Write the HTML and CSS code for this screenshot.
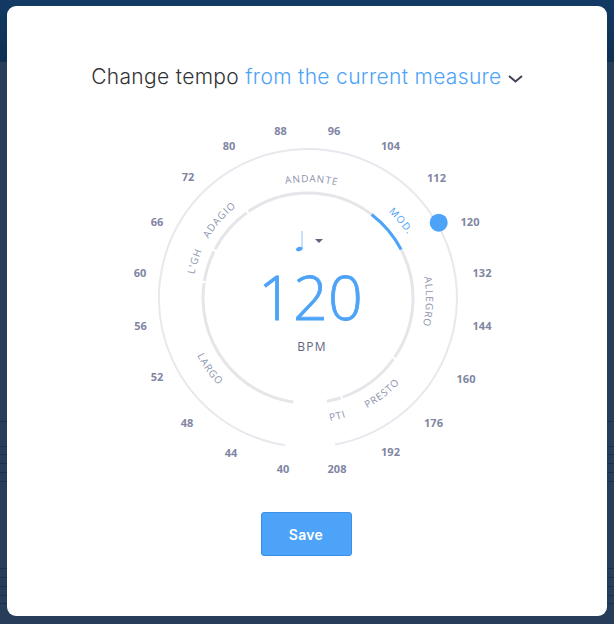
FILE: index.html
```html
<!DOCTYPE html>
<html lang="en">
<head>
  <meta charset="UTF-8">
  <meta name="viewport" content="width=device-width, initial-scale=1.0">
  <title>Change tempo</title>
  <link rel="stylesheet" href="styles.css">
</head>
<body>
  <div class="card">
    <h1 class="title">
      Change tempo <span class="title-link">from the current measure</span>
      <svg class="chevron" width="15" height="8" viewBox="0 0 15 8"><path d="M1 1l6.5 5.5L14 1"/></svg>
    </h1>

    <svg class="dial" width="600" height="420" viewBox="0 0 600 420">
      <defs>
        <path id="arcTop" d="M 185 219 A 116 116 0 0 1 417 219"/>
        <path id="arcRight" d="M 301 101 A 118 118 0 0 1 301 337"/>
        <path id="arcBottom" d="M 176 219 A 125 125 0 0 0 426 219"/>
      </defs>

      <path class="ring-outer" d="M 278 366.200 A 149 149 0 1 1 328 365.500"/>

      <g class="ring-inner">
        <path d="M 286.200 323 A 105 105 0 0 1 197.100 204"/>
        <path d="M 197.400 201.900 A 105 105 0 0 1 206.900 172.500"/>
        <path d="M 207.900 170.500 A 105 105 0 0 1 239.700 133.700"/>
        <path d="M 241.500 132.500 A 105 105 0 0 1 364.600 135.500"/>
        <path d="M 394.100 170.500 A 105 105 0 0 1 387.700 278.200"/>
        <path d="M 386.500 280 A 105 105 0 0 1 335.700 318.100"/>
        <path d="M 333.800 318.800 A 105 105 0 0 1 319.800 322.300"/>
      </g>
      <path class="ring-active" d="M 364.600 135.500 A 105 105 0 0 1 394.100 170.500"/>

      <g class="zone">
        <text><textPath href="#arcTop" startOffset="51%">ANDANTE</textPath></text>
        <text class="zone-active"><textPath href="#arcRight" startOffset="28%">MOD.</textPath></text>
        <text><textPath href="#arcRight" startOffset="51%">ALLEGRO</textPath></text>
        <text><textPath href="#arcTop" startOffset="23%">ADAGIO</textPath></text>
        <text><textPath href="#arcTop" startOffset="10%">L'GH</textPath></text>
        <text><textPath href="#arcBottom" startOffset="20%">LARGO</textPath></text>
        <text><textPath href="#arcBottom" startOffset="71%">PRESTO</textPath></text>
        <text><textPath href="#arcBottom" startOffset="57.800%">PTI</textPath></text>
      </g>

      <g class="tick">
        <text x="273.500" y="56">88</text>
        <text x="327" y="56">96</text>
        <text x="222" y="71">80</text>
        <text x="383.500" y="71">104</text>
        <text x="181" y="102">72</text>
        <text x="429.500" y="103">112</text>
        <text x="150" y="147">66</text>
        <text x="463" y="147">120</text>
        <text x="133" y="198">60</text>
        <text x="475" y="198">132</text>
        <text x="133.500" y="251">56</text>
        <text x="475" y="251">144</text>
        <text x="150" y="302">52</text>
        <text x="459" y="304">160</text>
        <text x="180" y="348">48</text>
        <text x="426.500" y="348">176</text>
        <text x="224" y="378">44</text>
        <text x="383.500" y="377">192</text>
        <text x="276" y="394">40</text>
        <text x="330" y="394">208</text>
      </g>

      <circle class="handle" cx="431.700" cy="143.700" r="9"/>

      <path class="note-stem" d="M 295 152 V 170"/>
      <path class="note-head" d="M 295.500 169.500 C 295.500 172.500 289 173.500 289 170.500 C 289 167.500 295.500 166.500 295.500 169.500 Z"/>
      <path class="caret" d="M 308 160 H 316 L 312 164 Z"/>

      <text class="bpm-value" x="303.500" y="240.500">120</text>
      <text class="bpm-label" x="305" y="272">BPM</text>
    </svg>

    <button class="save" type="button">Save</button>
  </div>
</body>
</html>
```

FILE: styles.css
```css
html, body {
  margin: 0;
  height: 100%;
}
body {
  background-color: #273e5b;
  background-image:
    linear-gradient(#123a63, #0f2f52),
    linear-gradient(#1a2f4a, #1a2f4a),
    linear-gradient(#1a2f4a, #1a2f4a),
    linear-gradient(#1a2f4a, #1a2f4a),
    linear-gradient(#1a2f4a, #1a2f4a),
    linear-gradient(#1a2f4a, #1a2f4a),
    linear-gradient(#1a2f4a, #1a2f4a),
    linear-gradient(#1a2f4a, #1a2f4a),
    linear-gradient(#1a2f4a, #1a2f4a),
    linear-gradient(#1a2f4a, #1a2f4a),
    linear-gradient(#1a2f4a, #1a2f4a),
    linear-gradient(#1a2f4a, #1a2f4a);
  background-repeat: no-repeat;
  background-size: 100% 62px, 100% 1px, 100% 1px, 100% 1px, 100% 1px, 100% 1px, 100% 1px, 100% 1px, 100% 1px, 100% 1px, 100% 1px, 100% 1px;
  background-position: 0 0, 0 421px, 0 446px, 0 454px, 0 463px, 0 472px, 0 481px, 0 568px, 0 577px, 0 586px, 0 595px, 0 603px;
  padding: 6px 7px 8px;
  box-sizing: border-box;
  font-family: "Open Sans", sans-serif;
}
.card {
  height: 610px;
  background-color: #fff;
  border-radius: 9px;
  display: flex;
  flex-direction: column;
  align-items: center;
}
.title {
  margin: 56px 0 0;
  font-family: Inter, sans-serif;
  font-size: 21px;
  line-height: 30px;
  font-weight: 300;
  letter-spacing: 0.33px;
  color: #333;
  white-space: nowrap;
}
.title-link {
  color: #4da3f7;
}
.chevron {
  fill: none;
  stroke: #3d4354;
  stroke-width: 2;
  vertical-align: 1px;
}
.dial {
  display: block;
  margin-top: -13px;
  flex: none;
}
.ring-outer {
  fill: none;
  stroke: #e8e8ee;
  stroke-width: 2;
}
.ring-inner path {
  fill: none;
  stroke: #e6e6ea;
  stroke-width: 3;
}
.ring-active {
  fill: none;
  stroke: #4da3f7;
  stroke-width: 3;
}
.zone {
  font-size: 10px;
  letter-spacing: 0.9px;
  fill: #8c93ad;
  text-anchor: middle;
}
.zone-active {
  fill: #4da3f7;
}
.tick {
  font-size: 11px;
  font-weight: 700;
  fill: #7f86a3;
  text-anchor: middle;
}
.handle {
  fill: #4da3f7;
}
.note-stem {
  fill: none;
  stroke: #8ec4fa;
  stroke-width: 1;
}
.note-head {
  fill: #4da3f7;
}
.caret {
  fill: #5f6680;
}
.bpm-value {
  font-size: 61px;
  font-weight: 300;
  fill: #4da3f7;
  stroke: #4da3f7;
  stroke-width: 0.8px;
  text-anchor: middle;
}
.bpm-label {
  font-size: 12px;
  letter-spacing: 1.3px;
  fill: #5f6680;
  text-anchor: middle;
}
.save {
  width: 91px;
  height: 44px;
  margin-top: 13px;
  margin-right: 2px;
  background-color: #4da3f7;
  color: #fff;
  border: 1px solid #3a8fe8;
  border-radius: 3px;
  font-family: Inter, sans-serif;
  font-size: 14px;
  font-weight: 600;
  letter-spacing: 0.3px;
}
```
